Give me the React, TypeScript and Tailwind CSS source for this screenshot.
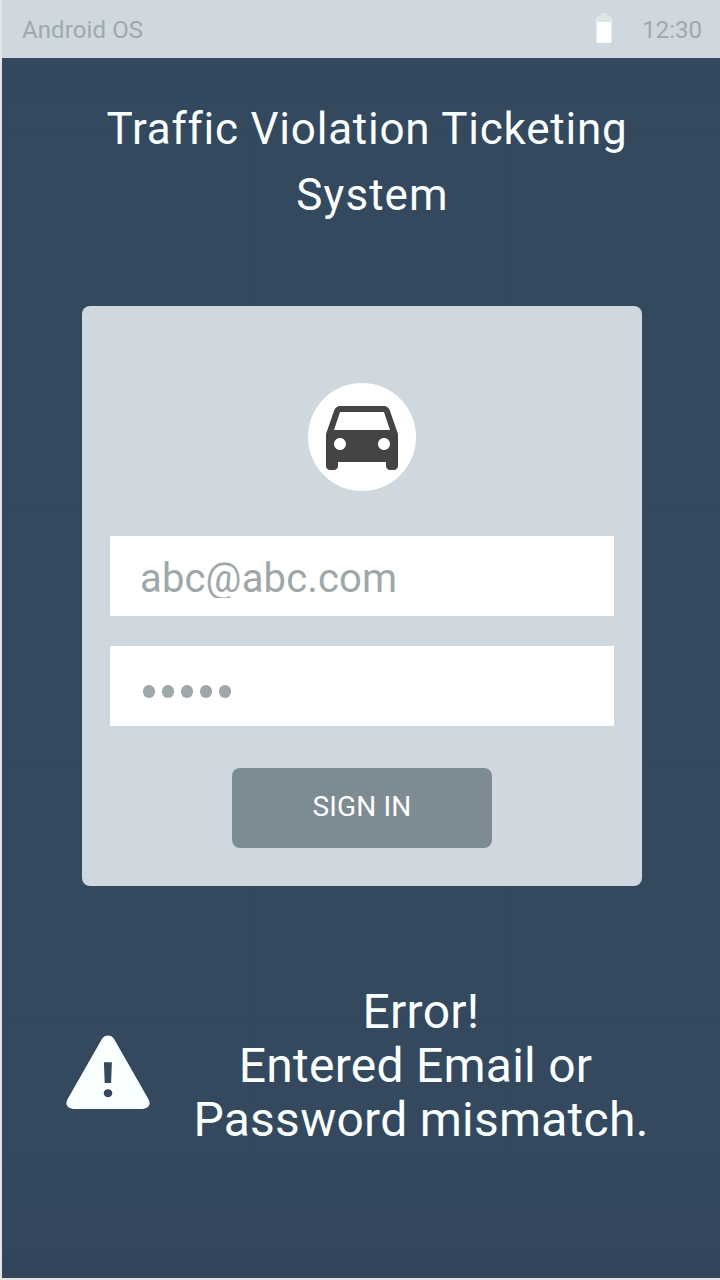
const CAR_PATH =
  'M18.92 6.01C18.72 5.42 18.16 5 17.5 5h-11c-.66 0-1.21.42-1.42 1.01L3 12v8c0 .55.45 1 1 1h1c.55 0 1-.45 1-1v-1h12v1c0 .55.45 1 1 1h1c.55 0 1-.45 1-1v-8l-2.08-5.99zM6.5 16c-.83 0-1.5-.67-1.5-1.5S5.67 13 6.5 13s1.5.67 1.5 1.5S7.33 16 6.5 16zm11 0c-.83 0-1.5-.67-1.5-1.5s.67-1.5 1.5-1.5 1.5.67 1.5 1.5-.67 1.5-1.5 1.5zM5 11l1.5-4.5h11L19 11H5z';

function BatteryIcon() {
  return (
    <svg width="16" height="30" viewBox="0 0 16 30" className="mb-[3px] mr-[30px] block">
      <path d="M5 0h6v3h3a2 2 0 0 1 2 2v4H0V5a2 2 0 0 1 2-2h3z" fill="#dde5e6" />
      <path d="M0.5 9h15v19a2 2 0 0 1-2 2h-11a2 2 0 0 1-2-2z" fill="#fff" />
    </svg>
  );
}

function StatusBar() {
  return (
    <header className="flex h-[58px] items-center bg-[#cfd8de] pl-5 pr-[18px] pt-px text-2xl text-[#a0a9aa]">
      <span className="grow tracking-[0.1px]">Android OS</span>
      <BatteryIcon />
      <span>12:30</span>
    </header>
  );
}

function LoginCard() {
  return (
    <main className="ml-20 mt-[78px] flex h-[580px] w-[560px] flex-col items-center rounded-lg bg-[#cfd8de] px-7 pt-[77px]">
      <div className="flex size-[108px] items-center justify-center rounded-full bg-white">
        <svg width="96" height="96" viewBox="0 0 24 24" className="-mt-[6px] block shrink-0" fill="#444">
          <path d={CAR_PATH} />
        </svg>
      </div>
      <div className="mt-[45px] h-20 w-full bg-white pl-[30px] pt-[19px]">
        <div className="h-[43px] overflow-hidden whitespace-nowrap text-[40px] leading-[47px] tracking-[0.15px] text-[#9ea7a9]">
          abc@abc.com
        </div>
      </div>
      <div className="mt-[30px] flex h-20 w-full items-center gap-[7px] bg-white pl-[33.4px] pt-[10px]">
        {[0, 1, 2, 3, 4].map((dot) => (
          <span key={dot} className="h-[13px] w-3 rounded-full bg-[#9ea7a9]" />
        ))}
      </div>
      <button className="mt-[42px] h-20 w-[260px] rounded-lg bg-[#7d8c92] pb-[3px] text-[28px] leading-[77px] tracking-[0.15px] text-white">
        SIGN IN
      </button>
    </main>
  );
}

function WarningIcon() {
  return (
    <svg width="84" height="75" viewBox="0 0 84 75" className="mt-[50px] block shrink-0">
      <path
        fillRule="evenodd"
        fill="#f9ffff"
        d="M36.2 3.6Q38.4 0.4 42 0.4T47.8 3.6L82.6 64.6Q84.6 68.6 82.6 71.2Q80.4 74 76.5 74H7.5Q3.6 74 1.4 71.2Q-0.6 68.6 1.4 64.6ZM37.9 27.2L38.7 48H45.1L45.9 27.2ZM42 54.2A4.3 4 0 1 0 42 62.2A4.3 4 0 1 0 42 54.2Z"
      />
    </svg>
  );
}

export default function App() {
  return (
    <div className="h-[1280px] w-[720px] overflow-hidden bg-[#e4e4e4] pl-0.5 font-['Roboto',sans-serif]">
      <div className="flex h-[1278px] flex-col bg-linear-to-b from-[#34495e] from-90% to-[#33455a]">
        <StatusBar />
        <h1 className="mt-[38px] flex flex-col items-center text-[44px] leading-[66px] text-[#f9ffff]">
          <span className="ml-[12px] whitespace-nowrap tracking-[0.77px]">Traffic Violation Ticketing</span>
          <span className="ml-[23px] whitespace-nowrap tracking-[1.05px]">System</span>
        </h1>
        <LoginCard />
        <section className="mt-[99px] flex pl-16">
          <WarningIcon />
          <p className="flex w-[542px] flex-col items-center whitespace-nowrap text-[48px] leading-[54px] tracking-[0.25px] text-[#f9ffff]">
            <span>Error!</span>
            <span className="mr-[11px]">Entered Email or</span>
            <span>Password mismatch.</span>
          </p>
        </section>
      </div>
    </div>
  );
}
